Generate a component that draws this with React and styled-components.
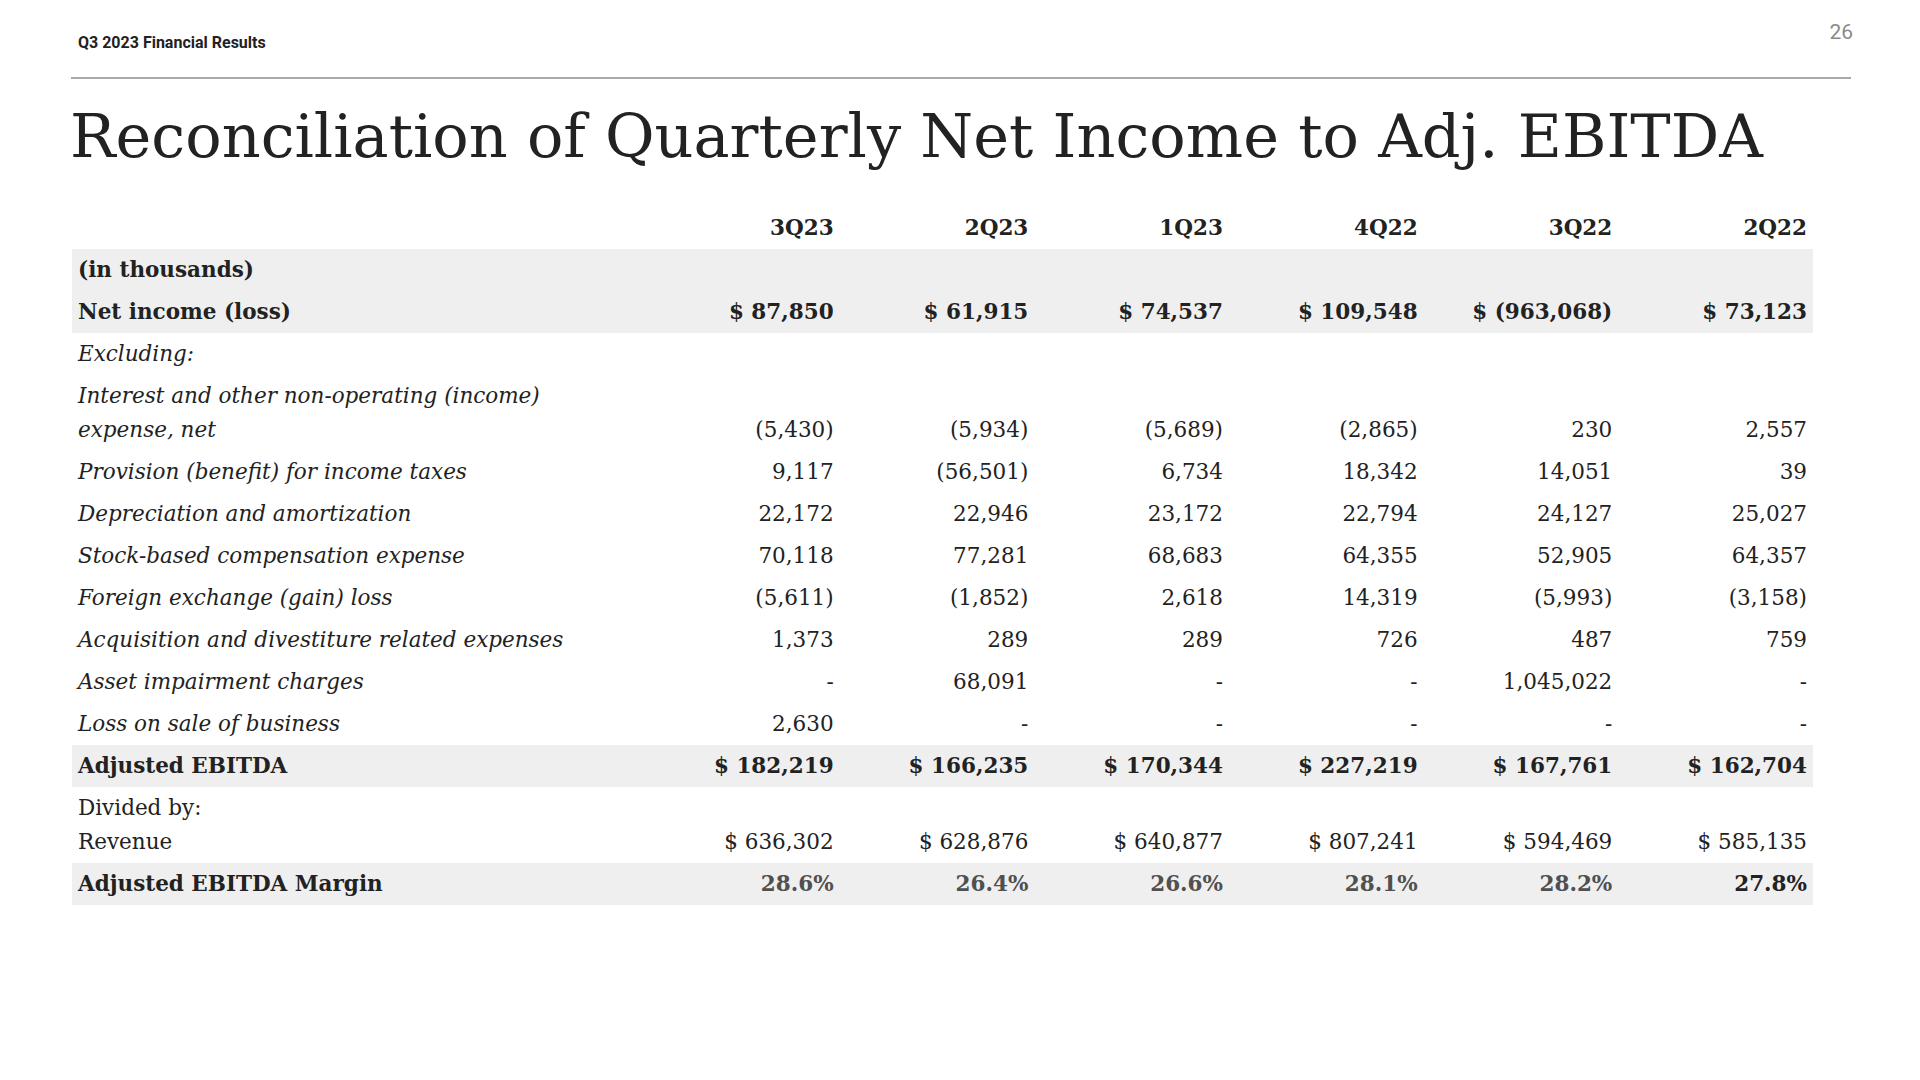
import styled, { createGlobalStyle } from "styled-components";

const GlobalStyle = createGlobalStyle`
  html, body {
    margin: 0;
    padding: 0;
    background: #ffffff;
  }
  body {
    font-family: "DejaVu Serif", "Liberation Serif", serif;
    color: #222222;
  }
`;

const Slide = styled.div`
  width: 1920px;
  height: 1080px;
  box-sizing: border-box;
  padding: 0 69px 0 71px;
  background: #ffffff;
  overflow: hidden;
`;

const TopBar = styled.div`
  display: flex;
  justify-content: space-between;
  align-items: flex-start;
  height: 79px;
  box-sizing: border-box;
  padding-top: 20px;
  border-bottom: 2px solid #a9a9a9;
`;

const DeckLabel = styled.div`
  margin: 13px 0 0 7px;
  font-family: Roboto, "Liberation Sans", sans-serif;
  font-size: 16px;
  font-weight: 700;
  line-height: 20px;
  color: #222222;
`;

const PageNumber = styled.div`
  margin-right: -2px;
  font-family: Roboto, "Liberation Sans", sans-serif;
  font-size: 21px;
  line-height: 24px;
  color: #8a8a8a;
`;

const Title = styled.h1`
  margin: 24px 0 0 -1px;
  font-family: "DejaVu Serif", "Liberation Serif", serif;
  font-size: 60.5px;
  font-weight: 400;
  line-height: 67px;
  color: #222222;
  white-space: nowrap;
`;

const Table = styled.table`
  margin: 37px 0 0 1px;
  width: 1741px;
  border-collapse: collapse;
  table-layout: fixed;
  font-family: "DejaVu Serif", "Liberation Serif", serif;
  font-size: 21.5px;
  line-height: 34px;
  font-variant-numeric: oldstyle-nums;
  color: #222222;
`;

const Row = styled.tr`
  background: ${(p) => (p.$band ? "#efefef" : "transparent")};
`;

const HeadCell = styled.th`
  padding: 4px 6px;
  text-align: right;
  font-weight: 700;
  vertical-align: bottom;
`;

const Label = styled.td`
  padding: 4px 6px;
  text-align: left;
  vertical-align: bottom;
  font-weight: ${(p) => (p.$bold ? 700 : 400)};
  font-style: ${(p) => (p.$italic ? "italic" : "normal")};
`;

const Value = styled.td`
  padding: 4px 6px;
  text-align: right;
  vertical-align: bottom;
  white-space: nowrap;
  font-weight: ${(p) => (p.$bold ? 700 : 400)};
  color: ${(p) => p.$color || "#222222"};
`;

const quarters = ["3Q23", "2Q23", "1Q23", "4Q22", "3Q22", "2Q22"];

const rows = [
  { label: "(in thousands)", bold: true, band: true, values: [] },
  {
    label: "Net income (loss)",
    bold: true,
    band: true,
    valuesBold: true,
    values: ["$ 87,850", "$ 61,915", "$ 74,537", "$ 109,548", "$ (963,068)", "$ 73,123"],
  },
  { label: "Excluding:", italic: true, values: [] },
  {
    label: ["Interest and other non-operating (income)", "expense, net"],
    italic: true,
    values: ["(5,430)", "(5,934)", "(5,689)", "(2,865)", "230", "2,557"],
  },
  {
    label: "Provision (benefit) for income taxes",
    italic: true,
    values: ["9,117", "(56,501)", "6,734", "18,342", "14,051", "39"],
  },
  {
    label: "Depreciation and amortization",
    italic: true,
    values: ["22,172", "22,946", "23,172", "22,794", "24,127", "25,027"],
  },
  {
    label: "Stock-based compensation expense",
    italic: true,
    values: ["70,118", "77,281", "68,683", "64,355", "52,905", "64,357"],
  },
  {
    label: "Foreign exchange (gain) loss",
    italic: true,
    values: ["(5,611)", "(1,852)", "2,618", "14,319", "(5,993)", "(3,158)"],
  },
  {
    label: "Acquisition and divestiture related expenses",
    italic: true,
    values: ["1,373", "289", "289", "726", "487", "759"],
  },
  {
    label: "Asset impairment charges",
    italic: true,
    values: ["-", "68,091", "-", "-", "1,045,022", "-"],
  },
  {
    label: "Loss on sale of business",
    italic: true,
    values: ["2,630", "-", "-", "-", "-", "-"],
  },
  {
    label: "Adjusted EBITDA",
    bold: true,
    band: true,
    valuesBold: true,
    values: ["$ 182,219", "$ 166,235", "$ 170,344", "$ 227,219", "$ 167,761", "$ 162,704"],
  },
  {
    label: ["Divided by:", "Revenue"],
    values: ["$ 636,302", "$ 628,876", "$ 640,877", "$ 807,241", "$ 594,469", "$ 585,135"],
  },
  {
    label: "Adjusted EBITDA Margin",
    bold: true,
    band: true,
    valuesBold: true,
    colors: ["#505050", "#505050", "#505050", "#505050", "#505050", "#222222"],
    values: ["28.6%", "26.4%", "26.6%", "28.1%", "28.2%", "27.8%"],
  },
];

function App() {
  return (
    <>
      <GlobalStyle />
      <Slide>
        <TopBar>
          <DeckLabel>Q3 2023 Financial Results</DeckLabel>
          <PageNumber>26</PageNumber>
        </TopBar>
        <Title>Reconciliation of Quarterly Net Income to Adj. EBITDA</Title>
        <Table>
          <colgroup>
            <col style={{ width: "573px" }} />
            {quarters.map((q) => (
              <col key={q} />
            ))}
          </colgroup>
          <thead>
            <tr>
              <HeadCell />
              {quarters.map((q) => (
                <HeadCell key={q}>{q}</HeadCell>
              ))}
            </tr>
          </thead>
          <tbody>
            {rows.map((row, index) => {
              const lines = Array.isArray(row.label) ? row.label : [row.label];
              return (
                <Row key={index} $band={row.band}>
                  <Label $bold={row.bold} $italic={row.italic}>
                    {lines.map((line, i) => (
                      <div key={i}>{line}</div>
                    ))}
                  </Label>
                  {quarters.map((q, i) => (
                    <Value
                      key={q}
                      $bold={row.valuesBold}
                      $color={row.colors && row.colors[i]}
                    >
                      {row.values[i] || ""}
                    </Value>
                  ))}
                </Row>
              );
            })}
          </tbody>
        </Table>
      </Slide>
    </>
  );
}

export default App;
